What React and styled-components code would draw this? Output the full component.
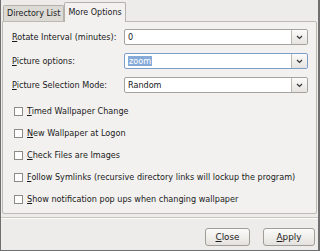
import React from 'react';
import styled, { createGlobalStyle } from 'styled-components';

const Global = createGlobalStyle`
  html, body { margin: 0; padding: 0; }
  body {
    background: #edeceb;
    font-family: "DejaVu Sans", "Liberation Sans", sans-serif;
    font-size: 8.1px;
    color: #1a1a1a;
  }
`;

const Window = styled.div`
  box-sizing: border-box;
  width: 320px;
  height: 251px;
  border: 1px solid #6f6f6f;
  border-top: none;
  border-right-width: 2px;
  background: #edeceb;
  display: flex;
  flex-direction: column;
`;

const TabBar = styled.div`
  display: flex;
  align-items: flex-end;
  height: 21px;
  padding-left: 2px;
`;

const Tab = styled.div`
  box-sizing: border-box;
  height: ${(p) => (p.active ? '20px' : '16px')};
  padding: 0 3px;
  display: flex;
  align-items: center;
  border: 1px solid #b5b2ac;
  border-bottom: none;
  border-radius: 2px 2px 0 0;
  background: ${(p) => (p.active ? '#f2f1f0' : '#dcdad5')};
  margin-bottom: ${(p) => (p.active ? '-1px' : '0')};
  position: relative;
  z-index: ${(p) => (p.active ? 1 : 0)};
  font-size: 8px;
`;

const Panel = styled.div`
  box-sizing: border-box;
  margin: 0 1px 0 1px;
  height: 193px;
  border: 1px solid #bdbab3;
  border-radius: 0 2px 2px 2px;
  background: #f2f1f0;
  padding: 7px 8px 0 9px;
`;

const FormRow = styled.div`
  display: flex;
  align-items: center;
  height: 16px;
  margin-bottom: 8px;
`;

const Label = styled.div`
  width: 112px;
  flex: none;
`;

const Mn = styled.span`
  text-decoration: underline;
`;

const Combo = styled.div`
  box-sizing: border-box;
  flex: 1;
  height: 16px;
  display: flex;
  border: 1px solid ${(p) => (p.focused ? '#7b9dcb' : '#a6a39d')};
  border-radius: 2px;
  background: #fff;
`;

const ComboText = styled.div`
  flex: 1;
  display: flex;
  align-items: center;
  padding-left: 3px;
`;

const Selected = styled.span`
  background: #86abd9;
  color: #fff;
  padding: 0 1px;
`;

const ComboButton = styled.div`
  width: 15px;
  border-left: 1px solid #bcb9b3;
  background: linear-gradient(#fbfbfa, #e6e4e0);
  display: flex;
  align-items: center;
  justify-content: center;
  border-radius: 0 2px 2px 0;
`;

const Checks = styled.div`
  margin-top: 13px;
  display: flex;
  flex-direction: column;
  gap: 12px;
`;

const CheckRow = styled.div`
  display: flex;
  align-items: center;
  height: 10px;
  padding-left: 2px;
`;

const Box = styled.span`
  box-sizing: border-box;
  width: 9px;
  height: 9px;
  border: 1px solid #8e8b85;
  background: #fff;
  margin-right: 4px;
`;

const Separator = styled.div`
  height: 1px;
  background: #c9c6c0;
  border-bottom: 1px solid #fbfbfa;
  margin: 3px 0 0 0;
`;

const Footer = styled.div`
  display: flex;
  justify-content: flex-end;
  gap: 13px;
  padding: 9px 3px 0 0;
`;

const Button = styled.button`
  box-sizing: border-box;
  width: ${(p) => p.w}px;
  height: 18px;
  border: 1px solid #a19e98;
  border-radius: 3px;
  background: linear-gradient(#fbfbfa, #e4e2de);
  font-family: inherit;
  font-size: 8.8px;
  color: #1a1a1a;
  padding: 0;
`;

function Arrow() {
  return (
    <svg width="7" height="5" viewBox="0 0 7 5">
      <path d="M1 1 L3.5 3.5 L6 1" fill="none" stroke="#333" strokeWidth="1.2" />
    </svg>
  );
}

export default function App() {
  const checks = [
    ['T', 'imed Wallpaper Change'],
    ['N', 'ew Wallpaper at Logon'],
    ['C', 'heck Files are Images'],
    ['F', 'ollow Symlinks (recursive directory links will lockup the program)'],
    ['S', 'how notification pop ups when changing wallpaper'],
  ];
  return (
    <>
      <Global />
      <Window>
        <TabBar>
          <Tab>Directory List</Tab>
          <Tab active>More Options</Tab>
        </TabBar>
        <Panel>
          <FormRow>
            <Label><Mn>R</Mn>otate Interval (minutes):</Label>
            <Combo>
              <ComboText>0</ComboText>
              <ComboButton><Arrow /></ComboButton>
            </Combo>
          </FormRow>
          <FormRow>
            <Label><Mn>P</Mn>icture options:</Label>
            <Combo focused>
              <ComboText><Selected>zoom</Selected></ComboText>
              <ComboButton><Arrow /></ComboButton>
            </Combo>
          </FormRow>
          <FormRow>
            <Label><Mn>P</Mn>icture Selection Mode:</Label>
            <Combo>
              <ComboText>Random</ComboText>
              <ComboButton><Arrow /></ComboButton>
            </Combo>
          </FormRow>
          <Checks>
            {checks.map(([m, rest]) => (
              <CheckRow key={rest}>
                <Box />
                <span><Mn>{m}</Mn>{rest}</span>
              </CheckRow>
            ))}
          </Checks>
        </Panel>
        <Separator />
        <Footer>
          <Button w={45}><Mn>C</Mn>lose</Button>
          <Button w={52}><Mn>A</Mn>pply</Button>
        </Footer>
      </Window>
    </>
  );
}
